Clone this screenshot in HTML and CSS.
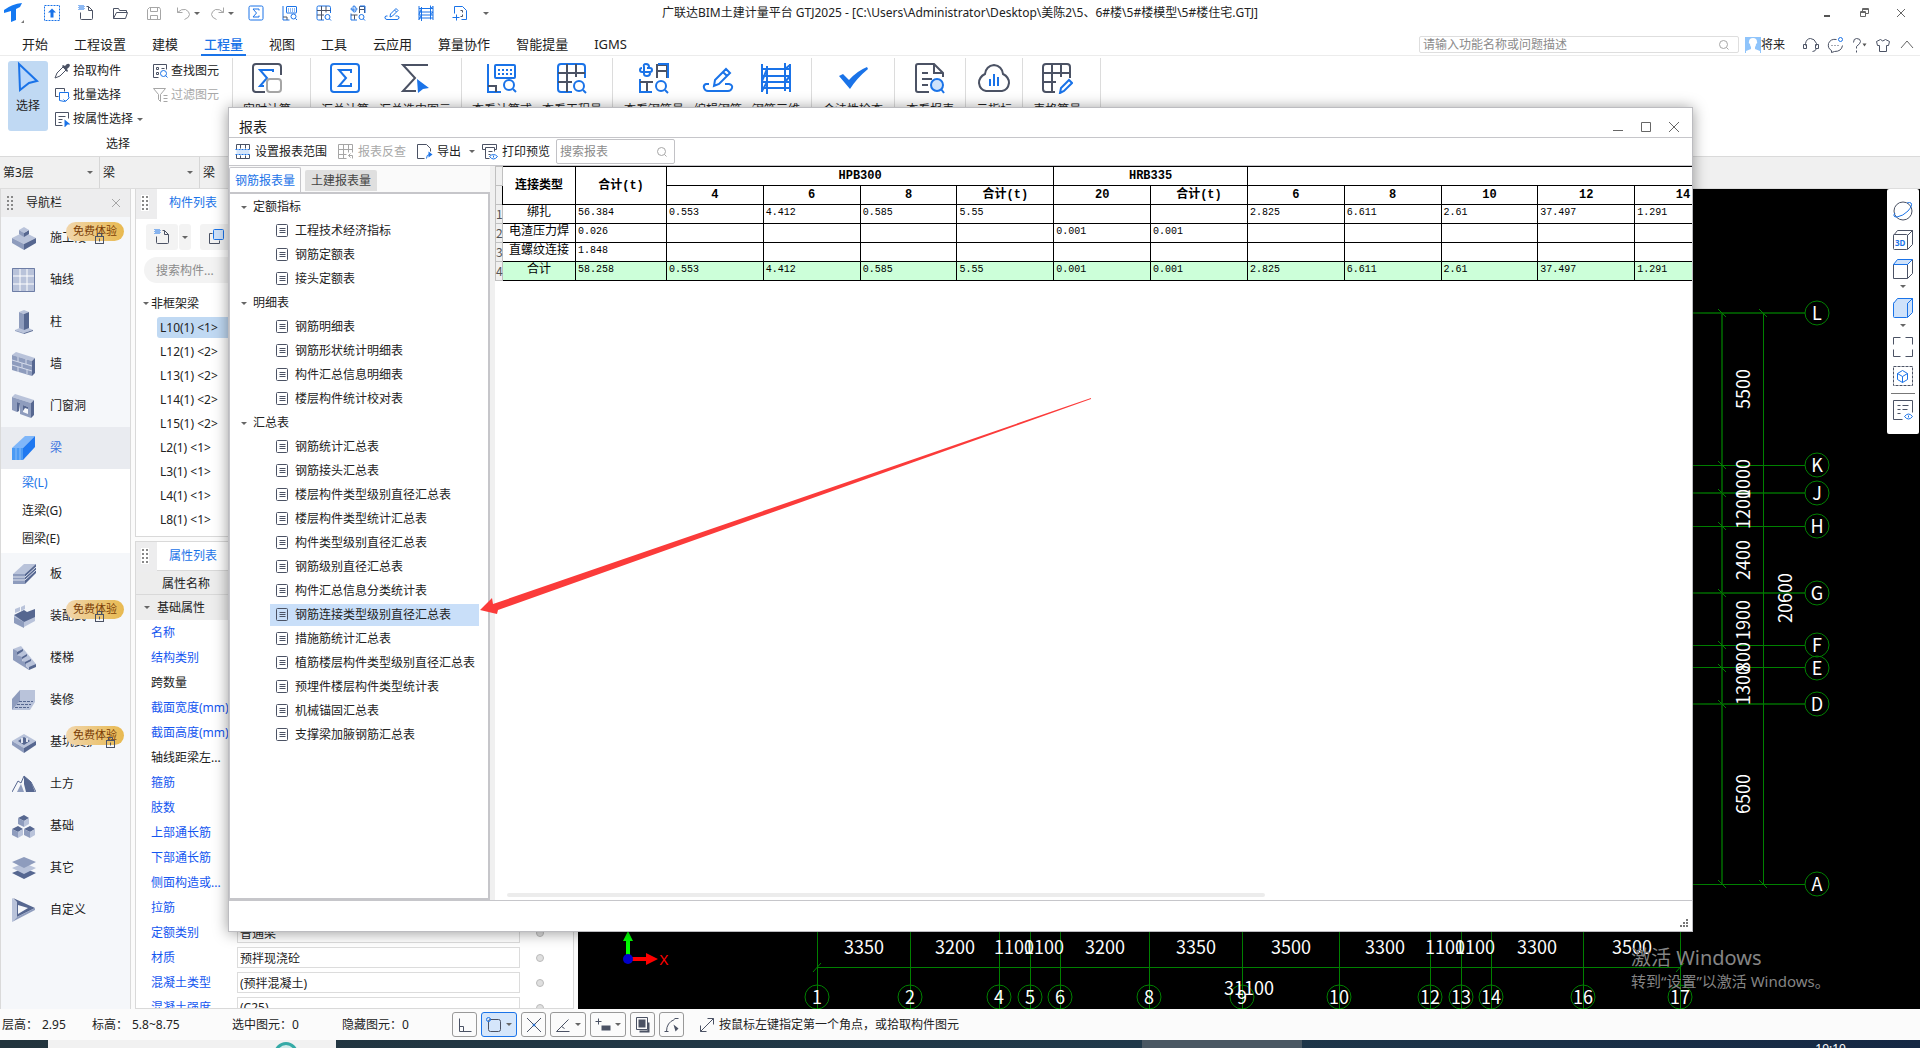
FILE: index.html
```html
<!DOCTYPE html>
<html lang="zh-CN">
<head>
<meta charset="utf-8">
<title>广联达BIM土建计量平台 GTJ2025</title>
<link rel="stylesheet" href="styles.css">
</head>
<body>
<svg class="defs" aria-hidden="true">
  <symbol id="i-sum" viewBox="0 0 32 32"><rect x="2" y="2" width="28" height="28" rx="3" class="b"/><path class="b" d="M22 11V8H10l7 8-7 8h12v-3"/></symbol>
  <symbol id="i-realtime" viewBox="0 0 32 32"><path class="d" d="M14 30H5q-3 0-3-3V5q0-3 3-3h22q3 0 3 3v8"/><path class="b" d="M22 10V8H9l7 8-7 8h4"/><rect x="16" y="17" width="14" height="13" rx="3" class="g"/></symbol>
  <symbol id="i-sumsel" viewBox="0 0 32 32"><path class="d" d="M29 3H4l12 13L4 29h13"/><path class="bf" d="M18 17l12 9-6 1-5 4z"/></symbol>
  <symbol id="i-formula" viewBox="0 0 32 32"><rect x="9" y="3" width="20" height="13" rx="1" class="b"/><path class="b" stroke-dasharray="2 2" d="M12 8h15M12 12h15"/><path class="b" d="M2 2v28h13"/><path class="d" d="M2 24h8v6"/><circle cx="23" cy="23" r="5" class="b"/><path class="b" d="M27 27l3 3"/></symbol>
  <symbol id="i-grid" viewBox="0 0 32 32"><path class="b" d="M16 30H5q-3 0-3-3V5q0-3 3-3h21q3 0 3 3v11"/><path class="d" d="M11 2v28M20 2v13M2 11h27M2 20h14"/><circle cx="23" cy="24" r="5" class="b"/><path class="b" d="M27 28l3 3"/></symbol>
  <symbol id="i-rebarq" viewBox="0 0 32 32"><path class="b" d="M11 5q0-3-3-3T6 5v7q0 2 3 2t3-3M4 6q-2 0-2 2t2 2h8q2 0 2-2t-2-2H9M2 17v13h12"/><path class="d" d="M19 16V3h10v13M19 9h10M2 20h13M9 20v9"/><path class="b" d="M20 2h10v14"/><circle cx="23" cy="24" r="5" class="b"/><path class="b" d="M27 28l3 3"/></symbol>
  <symbol id="i-editbar" viewBox="0 0 32 32"><path class="b" d="M7 22H4q-3 1-2 4 1 3 4 3h20q3 0 4-3 1-3-3-4h-4M12 24l1-6L24 7l4 4-11 11zM21 10l4 4"/></symbol>
  <symbol id="i-bar3d" viewBox="0 0 32 32"><path class="b" d="M2 2v28M7 4v28M25 1v28M30 2v28M2 7h28M2 14h28M2 20h28M2 26h28M7 7l-5 12M25 7l5-4M7 20l-5 9M25 20l5-6"/></symbol>
  <symbol id="i-check" viewBox="0 0 32 32"><path class="bf" d="M2 14l4-2 6 6Q20 9 30 5l1 2Q20 16 13 27z"/></symbol>
  <symbol id="i-report" viewBox="0 0 32 32"><path class="d" d="M15 30H4q-2 0-2-2V4q0-2 2-2h16l9 9v4M20 2v9h9M8 11h6M8 17h10M8 23h6"/><circle cx="23" cy="23" r="6" class="bl"/><path class="b" d="M27 27l3 4"/></symbol>
  <symbol id="i-cloud" viewBox="0 0 32 32"><path class="d" d="M8 29q-6-1-7-8 0-6 6-9 1-8 9-9 8 1 9 9 6 3 6 9-1 7-7 8z"/><path class="b" d="M12 17v7M16 12v12M20 15v9"/></symbol>
  <symbol id="i-gridpen" viewBox="0 0 32 32"><path class="d" d="M14 30H5q-3 0-3-3V5q0-3 3-3h21q3 0 3 3v11M11 2v28M20 2v13M2 11h27M2 20h13"/><path class="b" d="M19 31l1-5 8-8 3 3-8 8z"/></symbol>
  <symbol id="i-new" viewBox="-.5 -.5 16 16"><path class="d" d="M8 1h2l4 4v8q0 1-1 1H3q-1 0-1-1V7M10 1v4h4"/><path class="bd" d="M0 0h6M1 1h5M0 2h6M1 3h5M0 4h6"/></symbol>
  <symbol id="i-open" viewBox="-.5 -.5 16 16"><path class="d" d="M1 13V3h5l1 2h7v2M1 13h12l2-6H4z"/></symbol>
  <symbol id="i-save" viewBox="-.5 -.5 16 16"><path class="g" d="M1 14V4l2-2h10l1 2v10zM4 2v4h7V2M4 14v-4h7v4"/></symbol>
  <symbol id="i-undo" viewBox="-.5 -.5 16 16"><path class="g" d="M2 2v5h5M2 7q4-4 8-3 4 2 4 5t-5 5"/></symbol>
  <symbol id="i-redo" viewBox="-.5 -.5 16 16"><path class="g" d="M14 2v5H9M14 7q-4-4-8-3-4 2-4 5t5 5"/></symbol>
  <symbol id="i-up" viewBox="-.5 -.5 16 16"><rect x="0" y="0" width="15" height="15" class="b" stroke-dasharray="2 1"/><path class="bf" d="M7.500 3l4 4H9v5H6V7H3.500z"/></symbol>
  <symbol id="i-expand" viewBox="-.5 -.5 16 16"><path class="b" d="M2 8V1h8l4 4v9H9M0 12h7M4 9v6"/><path class="d" d="M8 5h2v2M8 11h2V9"/></symbol>
  <symbol id="i-mag" viewBox="-.5 -.5 12 12"><circle cx="5" cy="5" r="4" class="g"/><path class="g" d="M8 8l2 2"/></symbol>
  <symbol id="i-doc" viewBox="-.5 -.5 14 14"><rect x="1" y="0" width="11" height="12" rx="1" class="d"/><path class="d" d="M4 4h6M4 6h6M4 8h6"/></symbol>
  <symbol id="i-lock" viewBox="-.5 -.5 10 12"><rect x="0" y="3" width="8" height="7" class="d"/><path class="d" d="M2 3V0h4v3M4 5v3"/></symbol>
  <symbol id="i-caret" viewBox="0 0 8 5"><path d="M1 1h6L4 4z" fill="#666"/></symbol>
  <symbol id="i-copy" viewBox="-.5 -.5 16 16"><path class="d" d="M4 4H1v10h10v-3"/><rect x="5" y="0" width="10" height="10" rx="1" class="bl"/></symbol>
  <symbol id="i-find" viewBox="-.5 -.5 16 16"><path class="d" d="M6 14H1V1h13v5M4 4h2v2H4zM4 9h2v2H4zM9 5h3"/><circle cx="11" cy="10" r="3" class="b"/><path class="b" d="M13 12l2 2"/></symbol>
  <symbol id="i-cube" viewBox="-.5 -.5 20 20"><rect x="0" y="4" width="14" height="15" rx="1"/><path d="M0 5l4-5h15l-5 5M19 0v14l-5 5V5z"/></symbol>
</svg>

<div class="app">
  <header class="titlebar">
    <div class="quick">
      <svg class="logo" viewBox="0 0 20 20"><path fill="#1479f2" d="M0 7Q8 1 18 0l-2 4-4 2v11l-5 2V8L0 10z"/><path d="M20 17v3h-3z" fill="#777"/></svg>
      <button aria-label="上传"><svg class="s16"><use href="#i-up"/></svg></button>
      <button aria-label="新建"><svg class="s16"><use href="#i-new"/></svg></button>
      <button aria-label="打开"><svg class="s16"><use href="#i-open"/></svg></button>
      <button aria-label="保存"><svg class="s16"><use href="#i-save"/></svg></button>
      <button aria-label="撤销"><svg class="s16"><use href="#i-undo"/></svg><svg class="caret"><use href="#i-caret"/></svg></button>
      <button aria-label="恢复"><svg class="s16"><use href="#i-redo"/></svg><svg class="caret"><use href="#i-caret"/></svg></button>
      <button aria-label="汇总"><svg class="s16 w2"><use href="#i-sum"/></svg></button>
      <button aria-label="计算式"><svg class="s16 w2"><use href="#i-formula"/></svg></button>
      <button aria-label="工程量"><svg class="s16 w2"><use href="#i-grid"/></svg></button>
      <button aria-label="钢筋量"><svg class="s16 w2"><use href="#i-rebarq"/></svg></button>
      <button aria-label="编辑钢筋"><svg class="s16 w2"><use href="#i-editbar"/></svg></button>
      <button aria-label="钢筋三维"><svg class="s16 w2"><use href="#i-bar3d"/></svg></button>
      <button aria-label="扩展"><svg class="s16"><use href="#i-expand"/></svg></button>
      <button class="more" aria-label="更多"><svg class="caret"><use href="#i-caret"/></svg></button>
    </div>
    <h1>广联达BIM土建计量平台 GTJ2025 - [C:\Users\Administrator\Desktop\美陈2\5、6#楼\5#楼模型\5#楼住宅.GTJ]</h1>
    <div class="winctl">
      <button aria-label="最小化"><svg viewBox="0 0 12 12"><path class="k2" d="M3 9h6"/></svg></button>
      <button aria-label="还原"><svg viewBox="-.5 -.5 12 12"><path class="k" d="M4 4V1h6v5H7M2 4h5v5H2zM2 5h5M4 2h6"/></svg></button>
      <button aria-label="关闭"><svg viewBox="0 0 12 12"><path class="k" d="M2 2l8 8M10 2l-8 8"/></svg></button>
    </div>
  </header>

  <nav class="menu">
    <a href="#">开始</a><a href="#">工程设置</a><a href="#">建模</a><a href="#" class="on">工程量</a><a href="#">视图</a><a href="#">工具</a><a href="#">云应用</a><a href="#">算量协作</a><a href="#">智能提量</a><a href="#">IGMS</a>
    <div class="menu-right">
      <label class="ask"><input type="search" aria-label="搜索功能" placeholder="请输入功能名称或问题描述"><svg class="mag"><use href="#i-mag"/></svg></label>
      <span class="user"><svg viewBox="0 0 16 16"><path fill="#8fc4fb" d="M0 0h16v16H0z"/><path fill="#fff" d="M8 1q4 0 4 4 1 1-1 2 0 2-1 3v2l5 2v2H1v-2l5-2v-2Q5 9 5 7 3 6 4 5q0-4 4-4z"/></svg>将来</span>
      <svg class="s16" viewBox="-.5 -.5 16 16"><path class="d" d="M2 8V6q1-5 5-5t6 5v2M0 7h3v4H0zM12 7h3v4h-3zM13 11q-1 3-4 3"/></svg>
      <svg class="s16" viewBox="-.5 -.5 16 16"><path class="d" d="M9 2Q3 1 1 6q-1 5 3 7v2l3-1q7 0 8-6M4 8h1M7 8h1M10 8h1"/><circle cx="13" cy="2" r="2" class="b"/></svg>
      <svg class="s16" viewBox="-.5 -.5 16 16"><path class="d" d="M2 5q0-4 3-4 4 0 4 3 0 2-4 5v2M5 13v2"/><path d="M11 6h4l-2 3z" fill="#555"/></svg>
      <svg class="s16" viewBox="-.5 -.5 16 16"><path class="d" d="M5 2L1 4l1 4h2v6h7V8h2l1-4-4-2q-3 3-5 0z"/></svg>
      <svg class="s16" viewBox="0 0 16 16"><path class="k" d="M2 11l6-7 6 7"/></svg>
    </div>
  </nav>

  <section class="ribbon">
    <div class="grp select">
      <div class="select-row">
        <button class="pick"><svg viewBox="0 0 24 32"><path d="M3 3l18 17-8 2-9 7z" fill="#b9d7fa" stroke="#1a73e8" stroke-width="2"/></svg>选择</button>
        <div class="mini">
          <button><svg class="s16" viewBox="0 0 16 16"><path class="d" d="M1 15l2-5 6-6 3 3-6 6z"/><path d="M8 3l1-1 2 1q3-4 5-1 0 2-3 4l1 2-1 1z" fill="#4b5264"/></svg>拾取构件</button>
          <button><svg class="s16" viewBox="-.5 -.5 16 16"><path class="d" d="M4 9H1V1h9v3"/><path class="b" d="M5 5h9v5M5 5v8l5 1 1-1"/><path class="b" d="M9 12l2 2 4-4"/></svg>批量选择</button>
          <button><svg class="s16" viewBox="-.5 -.5 16 16"><path class="d" d="M8 14H1V1h13v6M4 5h7M4 8h4M4 11h3"/><path class="bf" d="M10 8l6 5-3 0-3 3z"/></svg>按属性选择<svg class="caret"><use href="#i-caret"/></svg></button>
        </div>
        <div class="mini">
          <button><svg class="s16"><use href="#i-find"/></svg>查找图元</button>
          <button class="off"><svg class="s16" viewBox="-.5 -.5 16 16"><path class="g" d="M1 1h12l-5 6v7l-2-2V7zM11 8h4M11 11h4M11 14h4"/></svg>过滤图元</button>
        </div>
      </div>
      <span class="cap">选择</span>
    </div>
    <div class="grp g-real"><button><svg class="s32"><use href="#i-realtime"/></svg>实时计算</button></div>
    <div class="grp"><button><svg class="s32"><use href="#i-sum"/></svg>汇总计算</button><button><svg class="s32"><use href="#i-sumsel"/></svg>汇总选中图元</button></div>
    <div class="grp"><button><svg class="s32"><use href="#i-formula"/></svg>查看计算式</button><button><svg class="s32"><use href="#i-grid"/></svg>查看工程量</button></div>
    <div class="grp roomy"><button><svg class="s32"><use href="#i-rebarq"/></svg>查看钢筋量</button><button><svg class="s32"><use href="#i-editbar"/></svg>编辑钢筋</button><button><svg class="s32"><use href="#i-bar3d"/></svg>钢筋三维</button></div>
    <div class="grp roomy"><button><svg class="s32"><use href="#i-check"/></svg>合法性检查</button></div>
    <div class="grp roomy"><button><svg class="s32"><use href="#i-report"/></svg>查看报表</button></div>
    <div class="grp"><button><svg class="s32"><use href="#i-cloud"/></svg>云指标</button></div>
    <div class="grp g-real"><button><svg class="s32"><use href="#i-gridpen"/></svg>表格算量</button></div>
  </section>

  <section class="context">
    <div class="combo"><select aria-label="楼层"><option>第3层</option></select><svg class="caret"><use href="#i-caret"/></svg></div>
    <div class="combo"><select aria-label="类别"><option>梁</option></select><svg class="caret"><use href="#i-caret"/></svg></div>
    <div class="combo"><select aria-label="构件类型"><option>梁</option></select><svg class="caret"><use href="#i-caret"/></svg></div>
  </section>

  <main>
    <aside class="nav">
      <div class="nav-head"><i class="grip"></i><span>导航栏</span><button aria-label="关闭导航栏"><svg viewBox="0 0 10 10"><path class="g" d="M1 1l8 8M9 1L1 9"/></svg></button></div>
      <a href="#" class="it"><svg viewBox="0 0 24 24"><path fill="#b9c3da" d="M0 12l12-6 12 6-12 6z"/><path fill="#8e9cbd" d="M0 12l12 6v6L0 17z"/><path fill="#566790" d="M24 12l-12 6v6l12-7zM12 7l5-3v4l-5 3z"/><path fill="#b9c3da" d="M7 4l5-3 5 3-5 3z"/><path fill="#8e9cbd" d="M7 4l5 3v4L7 8z"/></svg>施工段<svg class="lock"><use href="#i-lock"/></svg><b>免费体验</b></a>
      <a href="#" class="it"><svg viewBox="0 0 24 24"><path fill="#b9c3da" d="M0 0h23v24H0z"/><path stroke="#fff" d="M8 1v22M15 1v22M1 8h21M1 16h21" fill="none"/><path stroke="#6d7da5" fill="none" d="M.5 .5h22v23H.5z"/></svg>轴线</a>
      <a href="#" class="it"><svg viewBox="0 0 24 24"><path fill="#b9c3da" d="M3 20l9-4 9 4-9 3zM7 2l5-2 5 2-5 2z"/><path fill="#8e9cbd" d="M7 2l5 2v16l-5-2zM3 20l9 3v1l-9-3z"/><path fill="#566790" d="M17 2l-5 2v16l5-2zM21 20l-9 3v1l9-3z"/></svg>柱</a>
      <a href="#" class="it"><svg viewBox="0 0 24 24"><path fill="#b9c3da" d="M0 3l4-3 19 6-3 3z"/><path fill="#8e9cbd" d="M0 3l20 6v15L0 18z"/><path fill="#566790" d="M20 9l3-3v15l-3 3z"/><path stroke="#d5dbea" fill="none" d="M0 8l20 6M0 13l20 6M6 5v5M14 7v5M10 11v5M6 15v5M15 17v5"/></svg>墙</a>
      <a href="#" class="it"><svg viewBox="0 0 24 24"><path fill="#b9c3da" d="M0 3l3-3 19 6-3 3z"/><path fill="#8e9cbd" fill-rule="evenodd" d="M0 3l19 6v15L8 20V9L5 8v10l-5-2zM11 11v7l5 2v-7z"/><path fill="#566790" d="M19 9l3-3v15l-3 3zM5 8l3 1-1 8-2 1zM11 11l5 2v2l-3-1-2 3z"/></svg>门窗洞</a>
      <a href="#" class="it on"><svg viewBox="0 0 24 24"><path fill="#7fb6f9" d="M0 12L13 0h10L11 12z"/><path fill="#4b9bf5" d="M0 12h11v12H0z"/><path fill="#1f78f0" d="M11 12L23 0v11L11 24z"/><path stroke="#8bbdf8" d="M4 12v12M8 12v12"/></svg>梁</a>
      <div class="sub"><a href="#" class="on">梁(L)</a><a href="#">连梁(G)</a><a href="#">圈梁(E)</a></div>
      <a href="#" class="it"><svg viewBox="0 0 24 24"><path fill="#b9c3da" d="M1 12L12 2h12L13 12z"/><path fill="#8e9cbd" d="M1 12h12v10H1z"/><path fill="#566790" d="M13 12L24 2v9L13 22z"/><path stroke="#dfe4ef" fill="none" d="M1 15h12l11-10M1 18h12L24 8"/></svg>板</a>
      <a href="#" class="it"><svg viewBox="0 0 24 24"><path fill="#b9c3da" d="M2 11l10 6 11-6v6l-11 6-10-6zM3 5l5-2v4L3 9zM9 3l4-2v4L9 7z"/><path fill="#566790" d="M2 11l10-5 3 2 8-3v8l-11 5z"/><path fill="#8e9cbd" d="M2 13l10 5v6L2 19z"/></svg>装配式<svg class="lock"><use href="#i-lock"/></svg><b>免费体验</b></a>
      <a href="#" class="it"><svg viewBox="0 0 24 24"><path fill="#b9c3da" d="M1 3l8-3 15 18-7 5z"/><path fill="#8e9cbd" d="M1 3l4 2v4l5 2v4l4 1v4l3 3v1L1 14z"/><path fill="#566790" d="M5 6l6-3v2L5 9zM10 11l5-3v2l-5 3zM13 16l6-3v2l-6 3zM17 21l7-3v3l-7 3z"/></svg>楼梯</a>
      <a href="#" class="it"><svg viewBox="0 0 24 24"><path fill="#b9c3da" d="M8 2h15v12l-5 8H0l8-9z"/><path fill="#8e9cbd" d="M0 11l8-9v11l-8 9z"/><path stroke="#566790" fill="none" stroke-dasharray="3 1" d="M7 13.500h14M5 16.500h14M3 19.500h14"/></svg>装修</a>
      <a href="#" class="it"><svg viewBox="0 0 24 24"><path fill="#b9c3da" d="M0 11l12-7 12 7-12 7z"/><path fill="#8e9cbd" d="M0 11l12 7v5L0 15z"/><path fill="#566790" d="M24 11l-12 7v5l12-8zM6 11l6-4 6 4-6 4z"/><path fill="#dfe4ef" d="M9 8h2v5H9zM14 8h2v4h-2z"/></svg>基坑支护<svg class="lock far"><use href="#i-lock"/></svg><b>免费体验</b></a>
      <a href="#" class="it"><svg viewBox="0 0 24 24"><path fill="none" stroke="#566790" d="M0 20L6 9l3 2 3-7 7 6 5 10"/><path fill="#566790" d="M12 4l7 6 4 10h-9l-2-8z"/><path fill="#8e9cbd" d="M9 12l3 8H5z"/></svg>土方</a>
      <a href="#" class="it"><svg viewBox="0 0 24 24"><path fill="#566790" d="M6 4l6-3 5 3-5 3zM0 15l6-3 5 3-5 3zM12 15l6-3 5 3-5 3z"/><path fill="#8e9cbd" d="M6 4l6 3v6l-6-3zM0 15l6 3v6l-6-3zM12 15l6 3v6l-6-3z"/><path fill="#b9c3da" d="M17 4l-5 3v6l5-3zM11 15l-5 3v6l5-3zM23 15l-5 3v6l5-3z"/></svg>基础</a>
      <a href="#" class="it"><svg viewBox="0 0 24 24"><path fill="#566790" d="M0 17l12-5 12 5-12 6z"/><path fill="#b9c3da" d="M0 12l12-5 12 5-12 6z"/><path fill="#8e9cbd" d="M0 6l12-5 12 5-12 6z"/></svg>其它</a>
      <a href="#" class="it"><svg viewBox="0 0 24 24"><path fill="#b9c3da" d="M0 0l5 4v15l-5 5z"/><path fill="#566790" fill-rule="evenodd" d="M1 0l22 10-18 9V4zM6 7v9l10-6z"/><path fill="#8e9cbd" d="M0 24l5-5 18-9v2z"/></svg>自定义</a>
    </aside>

    <div class="panels">
      <section class="panel comps">
        <div class="panel-head"><i class="grip"></i><h2>构件列表</h2></div>
        <div class="tools"><button aria-label="新建构件"><svg class="s16"><use href="#i-new"/></svg></button><button class="thin" aria-label="新建选项"><svg class="caret"><use href="#i-caret"/></svg></button><button class="cp" aria-label="复制"><svg class="s16"><use href="#i-copy"/></svg></button></div>
        <input class="pill" type="search" aria-label="搜索构件" placeholder="搜索构件...">
        <ul>
          <li class="root"><svg class="caret"><use href="#i-caret"/></svg>非框架梁</li>
          <li class="on">L10(1) &lt;1&gt;</li><li>L12(1) &lt;2&gt;</li><li>L13(1) &lt;2&gt;</li><li>L14(1) &lt;2&gt;</li><li>L15(1) &lt;2&gt;</li><li>L2(1) &lt;1&gt;</li><li>L3(1) &lt;1&gt;</li><li>L4(1) &lt;1&gt;</li><li>L8(1) &lt;1&gt;</li>
        </ul>
      </section>
      <section class="panel props">
        <div class="panel-head"><i class="grip"></i><h2>属性列表</h2></div>
        <div class="prop-title">属性名称</div>
        <div class="prop-group"><svg class="caret"><use href="#i-caret"/></svg>基础属性</div>
        <div class="prop"><label for="p1">名称</label><input id="p1" value="L10(1)"><i></i></div>
        <div class="prop"><label for="p2">结构类别</label><input id="p2"><i></i></div>
        <div class="prop plain"><label for="p3">跨数量</label><input id="p3"><i></i></div>
        <div class="prop"><label for="p4">截面宽度(mm)</label><input id="p4"><i></i></div>
        <div class="prop"><label for="p5">截面高度(mm)</label><input id="p5"><i></i></div>
        <div class="prop plain"><label for="p6">轴线距梁左...</label><input id="p6"><i></i></div>
        <div class="prop"><label for="p7">箍筋</label><input id="p7"><i></i></div>
        <div class="prop"><label for="p8">肢数</label><input id="p8"><i></i></div>
        <div class="prop"><label for="p9">上部通长筋</label><input id="p9"><i></i></div>
        <div class="prop"><label for="p10">下部通长筋</label><input id="p10"><i></i></div>
        <div class="prop"><label for="p11">侧面构造或...</label><input id="p11"><i></i></div>
        <div class="prop"><label for="p12">拉筋</label><input id="p12"><i></i></div>
        <div class="prop"><label for="p13">定额类别</label><input id="p13" value="普通梁"><i></i></div>
        <div class="prop"><label for="p14">材质</label><input id="p14" value="预拌现浇砼"><i></i></div>
        <div class="prop"><label for="p15">混凝土类型</label><input id="p15" value="(预拌混凝土)"><i></i></div>
        <div class="prop"><label for="p16">混凝土强度</label><input id="p16" value="(C25)"><i></i></div>
      </section>
    </div>

    <section class="canvas">
      <svg class="drawing" viewBox="578 189 1342 820" preserveAspectRatio="xMinYMin slice">
        <g class="dim">
          <path class="dk" d="M1722 313V884M1693 313H1805M1693 493H1805M1693 593H1805M1693 704H1805"/>
          <path d="M1763.5 313V884M1693 465.500H1805M1693 526.500H1805M1693 645.500H1805M1693 667.500H1805M1693 884.500H1805"/>
          <path d="M1718 309l8 8M1759 309l8 8M1718 461l8 8M1718 489l8 8M1718 522l8 8M1718 589l8 8M1718 641l8 8M1718 664l8 8M1718 700l8 8M1718 880l8 8M1759 880l8 8"/>
          <path d="M817.500 930V1009M910.500 930V1009M999.500 930V1009M1030.500 930V1009M1060.500 930V1009M1149.500 930V1009M1242.500 930V1009M1339.500 930V1009M1430.500 930V1009M1461.500 930V1009M1491.500 930V1009M1583.500 930V1009M1680.500 930V1009M817 967.500H1680"/>
          <path d="M813 972l8-9M1676 972l8-9"/>
          <g class="rings">
            <circle cx="1817" cy="313" r="12"/><circle cx="1817" cy="465" r="12"/><circle cx="1817" cy="493" r="12"/><circle cx="1817" cy="526" r="12"/><circle cx="1817" cy="593" r="12"/><circle cx="1817" cy="645" r="12"/><circle cx="1817" cy="668" r="12"/><circle cx="1817" cy="704" r="12"/><circle cx="1817" cy="884" r="12"/>
            <circle cx="817" cy="997" r="12"/><circle cx="910" cy="997" r="12"/><circle cx="999" cy="997" r="12"/><circle cx="1030" cy="997" r="12"/><circle cx="1060" cy="997" r="12"/><circle cx="1149" cy="997" r="12"/><circle cx="1242" cy="997" r="12"/><circle cx="1339" cy="997" r="12"/><circle cx="1430" cy="997" r="12"/><circle cx="1461" cy="997" r="12"/><circle cx="1491" cy="997" r="12"/><circle cx="1583" cy="997" r="12"/><circle cx="1680" cy="997" r="12"/>
          </g>
        </g>
        <g class="lbl">
          <text x="1817" y="320">L</text><text x="1817" y="472">K</text><text x="1817" y="500">J</text><text x="1817" y="533">H</text><text x="1817" y="600">G</text><text x="1817" y="652">F</text><text x="1817" y="675">E</text><text x="1817" y="711">D</text><text x="1817" y="891">A</text>
          <text x="817" y="1004">1</text><text x="910" y="1004">2</text><text x="999" y="1004">4</text><text x="1030" y="1004">5</text><text x="1060" y="1004">6</text><text x="1149" y="1004">8</text><text x="1242" y="1004">9</text><text x="1339" y="1004">10</text><text x="1430" y="1004">12</text><text x="1461" y="1004">13</text><text x="1491" y="1004">14</text><text x="1583" y="1004">16</text><text x="1680" y="1004">17</text>
          <text x="864" y="954">3350</text><text x="955" y="954">3200</text><text x="1014" y="954">1100</text><text x="1044" y="954">1100</text><text x="1105" y="954">3200</text><text x="1196" y="954">3350</text><text x="1291" y="954">3500</text><text x="1385" y="954">3300</text><text x="1445" y="954">1100</text><text x="1475" y="954">1100</text><text x="1537" y="954">3300</text><text x="1632" y="954">3500</text><text x="1249" y="995">31100</text>
          <text transform="translate(1750 389) rotate(-90)">5500</text><text transform="translate(1750 479) rotate(-90)">1000</text><text transform="translate(1750 509) rotate(-90)">1200</text><text transform="translate(1750 560) rotate(-90)">2400</text><text transform="translate(1750 620) rotate(-90)">1900</text><text transform="translate(1750 657) rotate(-90)">800</text><text transform="translate(1750 685) rotate(-90)">1300</text><text transform="translate(1750 794) rotate(-90)">6500</text><text transform="translate(1792 598) rotate(-90)">20600</text>
        </g>
        <path d="M626 955V941h-3l5-10 5 10h-3v14z" fill="#0f0"/><path d="M632 957h14v-4l12 6-12 6v-4h-14z" fill="#f00"/><circle cx="628" cy="959" r="5" fill="#00c"/>
        <text x="664" y="965" class="ax">X</text>
        <g class="wm"><text class="wm1" x="1631" y="965">激活 Windows</text><text class="wm2" x="1631" y="987">转到“设置”以激活 Windows。</text></g>
      </svg>
      <div class="viewbar">
        <button aria-label="动态观察"><svg viewBox="0 0 20 20"><circle cx="10" cy="10" r="9" class="d"/><path class="b" d="M2 12q-3 4 2 4 6-1 11-6 5-6 3-8-1-1-4 0"/></svg></button>
        <button aria-label="三维"><svg class="d"><use href="#i-cube"/><text x="2" y="16">3D</text></svg></button>
        <button class="dd" aria-label="俯视"><svg viewBox="-.5 -.5 20 20"><path class="d" d="M0 5h14v14H0zM19 0v14l-5 5"/><path class="bl" d="M0 5l4-5h15l-5 5z"/></svg><svg class="caret"><use href="#i-caret"/></svg></button>
        <button class="dd" aria-label="着色"><svg class="bl"><use href="#i-cube"/></svg><svg class="caret"><use href="#i-caret"/></svg></button>
        <button aria-label="全屏"><svg viewBox="-.5 -.5 20 20"><path class="d" d="M0 7V0h7M12 0h7v7M19 12v7h-7M7 19H0v-7"/></svg></button>
        <button aria-label="局部三维"><svg viewBox="-.5 -.5 20 20"><path class="d" stroke-dasharray="3 1" d="M0 0h19v19H0z"/><path class="b" d="M9 4l5 3v6l-5 3-5-3V7zM4 7l5 3 5-3M9 10v6"/></svg></button>
        <hr>
        <button aria-label="显示设置"><svg viewBox="-.5 -.5 20 20"><path class="d" d="M9 19H0V0h19v12M4 5h3M9 5h6M4 9h3M9 9h5M4 13h3"/><path class="b" d="M11 16q4-5 8 0-4 5-8 0zM15 15v2"/></svg></button>
      </div>
    </section>
  </main>

  <footer class="status">
    <span class="s1">层高：</span><span class="s2">2.95</span><span class="s3">标高：</span><span class="s4">5.8~8.75</span><span class="s5">选中图元：0</span><span class="s6">隐藏图元：0</span>
    <div class="snap">
      <button aria-label="正交"><svg viewBox="-.5 -.5 16 16"><path class="d" d="M2 1v13h12M2 9h4v5"/></svg></button>
      <button class="w on" aria-label="矩形"><svg viewBox="-.5 -.5 16 16"><rect x="2" y="2" width="12" height="12" rx="2" class="d"/><circle cx="2" cy="2" r="2" class="b"/></svg><svg class="caret"><use href="#i-caret"/></svg></button>
      <button aria-label="交点"><svg viewBox="0 0 16 16"><path class="d" d="M1 1l14 14M15 1L1 15"/><circle cx="8" cy="8" r="1" class="b"/></svg></button>
      <button class="w" aria-label="角度"><svg viewBox="-.5 -.5 16 16"><path class="d" d="M13 2L1 14h13M6 9l3 2"/></svg><svg class="caret"><use href="#i-caret"/></svg></button>
      <button class="w" aria-label="偏移"><svg viewBox="-.5 -.5 16 16"><path class="d" d="M0 4h6M3 1v6"/><path fill="#4b5264" d="M6 8h9v5H6z"/></svg><svg class="caret"><use href="#i-caret"/></svg></button>
      <button aria-label="选择层"><svg viewBox="-.5 -.5 16 16"><path class="d" d="M1 0h11v12H1z"/><path fill="#4b5264" d="M3 2h7v8H3zM12 5h2v10H4v-2h8z"/></svg></button>
      <button aria-label="折线"><svg viewBox="-.5 -.5 16 16"><path class="d" d="M2 14q0-9 8-12M0 14h4M10 1h4"/><path fill="#4b5264" d="M9 7l5 4-3 3z"/></svg></button>
    </div>
    <svg class="s16 diag" viewBox="-.5 -.5 16 16"><path class="d" d="M1 14L14 1M8 1h6v6M1 8v6h6"/></svg>
    <span>按鼠标左键指定第一个角点，或拾取构件图元</span>
  </footer>
  <div class="taskbar"><span class="start"></span><span class="pale"><i></i></span><span class="lit"></span><time>19:10</time></div>
</div>

<section class="dialog" role="dialog" aria-label="报表">
  <header><h2>报表</h2>
    <button aria-label="最小化"><svg viewBox="0 0 12 12"><path class="k" d="M1 9.500h10"/></svg></button>
    <button aria-label="最大化"><svg viewBox="0 0 12 12"><path class="k" d="M1.500 1.500h9v9h-9z"/></svg></button>
    <button aria-label="关闭"><svg viewBox="0 0 12 12"><path class="k" d="M1 1l10 10M11 1L1 11"/></svg></button>
  </header>
  <div class="dlg-tools">
    <button><svg class="s16" viewBox="-.5 -.5 16 16"><path fill="#d5e6fb" d="M1 5h13v5H1z"/><path class="d" d="M1 5V0h13v5M1 10v4h13v-4M5 0v4M10 0v4M5 11v3M10 11v3"/><path class="b" stroke-dasharray="2 1" d="M0 5h15M0 10h15"/></svg>设置报表范围</button>
    <button class="off"><svg class="s16" viewBox="-.5 -.5 16 16"><path class="g" d="M8 14H0V0h14v8M5 0v14M10 0v8M0 5h14M0 10h8M14 14v-3h-4M12 9l-2 2 2 2"/></svg>报表反查</button>
    <button><svg class="s16" viewBox="-.5 -.5 16 16"><path class="d" d="M7 14H0V0h9l4 4v3"/><path class="b" d="M9 14q0-4 3-4"/><path class="bf" d="M11 7l4 3-4 3z"/></svg>导出<svg class="caret"><use href="#i-caret"/></svg></button>
    <button><svg class="s16" viewBox="-.5 -.5 16 16"><path class="d" d="M3 5H0V0h14v5h-2M3 3v11h4M3 3h9v4M6 7h4M6 10h2"/><path class="b" d="M7 12q4-4 8 0-4 5-8 0zM11 11v2"/></svg>打印预览</button>
    <label><input type="search" aria-label="搜索报表" placeholder="搜索报表"><svg class="mag"><use href="#i-mag"/></svg></label>
  </div>
  <div class="dlg-body">
    <div class="left">
      <div class="tabs"><button class="on">钢筋报表量</button><button>土建报表量</button></div>
      <ul class="tree">
        <li class="root"><svg class="caret"><use href="#i-caret"/></svg>定额指标</li>
        <li><svg><use href="#i-doc"/></svg><span>工程技术经济指标</span></li>
        <li><svg><use href="#i-doc"/></svg><span>钢筋定额表</span></li>
        <li><svg><use href="#i-doc"/></svg><span>接头定额表</span></li>
        <li class="root"><svg class="caret"><use href="#i-caret"/></svg>明细表</li>
        <li><svg><use href="#i-doc"/></svg><span>钢筋明细表</span></li>
        <li><svg><use href="#i-doc"/></svg><span>钢筋形状统计明细表</span></li>
        <li><svg><use href="#i-doc"/></svg><span>构件汇总信息明细表</span></li>
        <li><svg><use href="#i-doc"/></svg><span>楼层构件统计校对表</span></li>
        <li class="root"><svg class="caret"><use href="#i-caret"/></svg>汇总表</li>
        <li><svg><use href="#i-doc"/></svg><span>钢筋统计汇总表</span></li>
        <li><svg><use href="#i-doc"/></svg><span>钢筋接头汇总表</span></li>
        <li><svg><use href="#i-doc"/></svg><span>楼层构件类型级别直径汇总表</span></li>
        <li><svg><use href="#i-doc"/></svg><span>楼层构件类型统计汇总表</span></li>
        <li><svg><use href="#i-doc"/></svg><span>构件类型级别直径汇总表</span></li>
        <li><svg><use href="#i-doc"/></svg><span>钢筋级别直径汇总表</span></li>
        <li><svg><use href="#i-doc"/></svg><span>构件汇总信息分类统计表</span></li>
        <li class="on"><svg><use href="#i-doc"/></svg><span>钢筋连接类型级别直径汇总表</span></li>
        <li><svg><use href="#i-doc"/></svg><span>措施筋统计汇总表</span></li>
        <li><svg><use href="#i-doc"/></svg><span>植筋楼层构件类型级别直径汇总表</span></li>
        <li><svg><use href="#i-doc"/></svg><span>预埋件楼层构件类型统计表</span></li>
        <li><svg><use href="#i-doc"/></svg><span>机械锚固汇总表</span></li>
        <li><svg><use href="#i-doc"/></svg><span>支撑梁加腋钢筋汇总表</span></li>
      </ul>
    </div>
    <div class="sheet">
      <table>
        <colgroup><col class="c0"><col class="c1"><col class="c2"><col span="11"></colgroup>
        <thead>
          <tr><td class="n"></td><th rowspan="2">连接类型</th><th rowspan="2">合计(t)</th><th colspan="4">HPB300</th><th colspan="2">HRB335</th><th colspan="5"></th></tr>
          <tr><td class="n"></td><th>4</th><th>6</th><th>8</th><th>合计(t)</th><th>20</th><th>合计(t)</th><th>6</th><th>8</th><th>10</th><th>12</th><th>14</th></tr>
        </thead>
        <tbody>
          <tr><td class="n">1</td><td class="m">绑扎</td><td>56.384</td><td>0.553</td><td>4.412</td><td>0.585</td><td>5.55</td><td></td><td></td><td>2.825</td><td>6.611</td><td>2.61</td><td>37.497</td><td>1.291</td></tr>
          <tr><td class="n">2</td><td class="m">电渣压力焊</td><td>0.026</td><td></td><td></td><td></td><td></td><td>0.001</td><td>0.001</td><td></td><td></td><td></td><td></td><td></td></tr>
          <tr><td class="n">3</td><td class="m">直螺纹连接</td><td>1.848</td><td></td><td></td><td></td><td></td><td></td><td></td><td></td><td></td><td></td><td></td><td></td></tr>
          <tr class="total"><td class="n">4</td><td class="m">合计</td><td>58.258</td><td>0.553</td><td>4.412</td><td>0.585</td><td>5.55</td><td>0.001</td><td>0.001</td><td>2.825</td><td>6.611</td><td>2.61</td><td>37.497</td><td>1.291</td></tr>
        </tbody>
      </table>
      <div class="hbar"></div>
    </div>
  </div>
  <footer><svg viewBox="0 0 9 9"><path fill="#777" d="M6 0h2v2H6zM6 3h2v2H6zM3 3h2v2H3zM6 6h2v2H6zM3 6h2v2H3zM0 6h2v2H0z"/></svg></footer>
  <svg class="arrow" viewBox="480 398 612 218"><path fill="#fb3b3a" d="M480 610l12-12 1 6L1091 398v1L498 610l-1 4z"/></svg>
</section>
</body>
</html>
```
FILE: styles.css
```css
* { box-sizing: border-box; }
body { margin: 0; font: 12px/18px "Noto Sans", "Noto Sans CJK SC", sans-serif; color: #222; background: #fff; }
button, input, select { font: inherit; color: inherit; border: 0; background: none; padding: 0; margin: 0; outline: 0; }
button { white-space: nowrap; }
a { color: inherit; text-decoration: none; }
h1, h2 { margin: 0; font-weight: 400; }
ul { list-style: none; margin: 0; padding: 0; }
svg { display: block; flex: none; fill: none; }
input::placeholder { color: #8b8b8b; opacity: 1; }
input[type=search]::-webkit-search-cancel-button { display: none; }
.defs { position: absolute; width: 0; height: 0; }

/* stroke classes used by every icon */
.d { fill: none; stroke: #4b5264; stroke-width: var(--w, 1); }
.b { fill: none; stroke: #1a73e8; stroke-width: var(--w, 1); }
.g { fill: none; stroke: #a6a6a6; stroke-width: var(--w, 1); }
.bl { fill: #cfe2fa; stroke: #1a73e8; stroke-width: var(--w, 1); }
.k { fill: none; stroke: #666; }
.k2 { fill: none; stroke: #555; stroke-width: 2; }
.bf { fill: #1a73e8; }
.bd { fill: none; stroke: #1a73e8; stroke-dasharray: 1 1; }
.s16 { width: 16px; height: 16px; --w: 1; }
.w2 { --w: 2; }
.s32 { width: 32px; height: 32px; --w: 2; }
.caret { width: 8px; height: 5px; }
.mag { width: 12px; height: 12px; }

.app { height: 100vh; display: flex; flex-direction: column; overflow: hidden; }
.titlebar { height: 26px; display: grid; grid-template-columns: 1fr auto 1fr; align-items: center; }
.titlebar h1 { font-size: 12px; white-space: nowrap; }
.quick { display: flex; align-items: center; }
.quick .logo { width: 20px; height: 20px; margin: 0 11px 0 4px; }
.quick button { width: 34px; height: 24px; display: flex; align-items: center; justify-content: center; gap: 2px; }
.quick .more { width: 18px; }
.winctl { justify-self: end; display: flex; gap: 25px; padding-right: 13px; }
.winctl svg { width: 12px; height: 12px; }

.menu { height: 30px; display: flex; gap: 26px; padding: 0 5px 0 22px; align-items: center; border-bottom: 1px solid #ececec; font-size: 13px; }
.menu a { position: relative; align-self: stretch; line-height: 24px; padding-top: 6px; }
.menu .on { color: #1a73e8; font-weight: 500; }
.menu .on::after { content: ""; position: absolute; left: -3px; right: -3px; bottom: -1px; height: 2px; background: #1a73e8; }
.menu-right { margin-left: auto; display: flex; align-items: center; gap: 8px; font-size: 12px; padding-top: 8px; }
.ask { width: 320px; height: 17px; border: 1px solid #dedede; border-radius: 2px; display: flex; align-items: center; padding: 0 8px 0 3px; }
.ask input { flex: 1; line-height: 15px; }
.user { display: flex; align-items: center; margin-right: 10px; margin-left: -2px; }
.user svg { width: 16px; height: 16px; }

.ribbon { height: 100px; display: flex; padding-top: 2px; }
.grp { display: flex; gap: 10px; padding: 4px 10px 0; border-right: 1px solid #dcdcdc; }
.grp.roomy { padding: 4px 11px 0; }
.grp > button { display: flex; flex-direction: column; align-items: center; gap: 7px; align-self: flex-start; }
.g-real { width: 78px; }
.grp.select { width: 233px; padding: 3px 8px 0; flex-direction: column; gap: 4px; }
.select-row { display: flex; height: 70px; }
.pick { width: 40px; height: 70px; display: flex; flex-direction: column; align-items: center; gap: 4px; background: #c0d9f3; border-radius: 3px; }
.pick svg { width: 24px; height: 32px; }
.mini { display: flex; flex-direction: column; gap: 6px; padding: 1px 0 0 6px; }
.mini + .mini { padding-left: 8px; }
.mini button { display: flex; align-items: center; gap: 3px; height: 18px; }
.off { color: #a8a8a8; }
.cap { text-align: center; padding-left: 4px; }

.context { height: 32px; display: flex; background: #f0f0f0; border-top: 1px solid #dadada; }
.combo { width: 100px; display: flex; align-items: center; border-right: 1px solid #d6d6d6; padding: 0 5px 0 3px; }
.combo select { flex: 1; appearance: none; height: 28px; }

main { flex: 1; min-height: 0; display: flex; gap: 4px; border-top: 1px solid #ddd; background: #fbfbfb; }
.nav { width: 131px; background: #f5f7fa; border: solid #dadada; border-width: 0 1px; overflow: hidden; }
.grip { width: 8px; height: 16px; background: radial-gradient(circle, #888 1px, transparent 1px) 0 0 / 4px 4px; flex: none; }
.nav-head { height: 28px; background: #ededee; display: flex; align-items: center; padding: 0 9px 0 5px; gap: 12px; }
.nav-head button { margin-left: auto; }
.nav-head svg { width: 10px; height: 10px; }
.it { position: relative; height: 42px; display: flex; align-items: center; gap: 14px; padding-left: 11px; }
.it > svg { width: 24px; height: 24px; }
.it.on { background: #e9ebf0; color: #3b73e0; }
.it b { position: absolute; left: 65px; top: 5px; width: 58px; height: 19px; border-radius: 10px; background: linear-gradient(90deg, #f1d6ac, #e8b950); color: #7a3c05; font-weight: 400; font-size: 11px; text-align: center; }
.it .lock { position: absolute; left: 94px; top: 16px; width: 10px; height: 12px; z-index: 1; }
.it .far { left: 105px; }
.sub { background: #fff; height: 84px; }
.sub a { display: block; line-height: 28px; padding-left: 21px; }
.sub .on { color: #1a73e8; }

.panels { width: 439px; display: flex; flex-direction: column; gap: 4px; min-height: 0; }
.panel { background: #fff; border: 1px solid #d9d9d9; border-top-width: 0; overflow: hidden; }
.comps { height: 348px; flex: none; }
.props { flex: 1; border-top-width: 1px; }
.panel-head { height: 28px; display: flex; align-items: center; background: #fff; }
.panel-head .grip { margin: 0 9px 0 5px; box-shadow: 0 0 0 8px #ededee; }
.panel-head h2 { font-size: 12px; color: #1a73e8; padding-left: 11px; }
.tools { display: flex; padding: 7px 10px; gap: 1px; }
.tools button { width: 32px; height: 26px; background: #f3f3f3; border-radius: 3px; display: flex; align-items: center; justify-content: center; }
.tools .thin { width: 12px; }
.tools .cp { margin-left: 8px; }
.pill { display: block; margin-left: 8px; width: 300px; height: 26px; border-radius: 13px; background: #f3f3f3; padding-left: 12px; }
.comps li { height: 21px; line-height: 21px; margin: 0 0 3px 21px; padding-left: 3px; border-radius: 3px; }
.comps .root { margin: 10px 0 3px 6px; padding: 0; display: flex; align-items: center; gap: 1px; }
.comps .on { background: #c0d9f3; }
.prop-title { height: 25px; line-height: 25px; background: #ededed; border: solid #d9d9d9; border-width: 1px 0; padding-left: 26px; }
.prop-group { height: 25px; background: #ededed; display: flex; align-items: center; gap: 6px; padding-left: 7px; }
.prop { height: 25px; display: flex; align-items: center; color: #1456f0; }
.prop.plain { color: #222; }
.prop label { width: 101px; padding-left: 15px; white-space: nowrap; overflow: hidden; }
.prop input { width: 283px; height: 21px; border: 1px solid #dcdcdc; padding-left: 2px; color: #222; }
.prop i { width: 8px; height: 8px; margin-left: 16px; border-radius: 50%; border: 1px solid #bbb; background: #dfdfdf; }

.canvas { flex: 1; min-width: 0; background: #000; position: relative; overflow: hidden; }
.drawing { width: 100%; height: 100%; }
.dim path { stroke: #008000; }
.dim .dk { stroke: #005200; stroke-width: 2; }
.rings circle { stroke: #008000; }
.lbl text { fill: #fff; font-family: "Noto Sans CJK SC", sans-serif; font-size: 18px; text-anchor: middle; }
.ax { fill: #f00; font-size: 15px; text-anchor: middle; }
.wm { fill: #858585; }
.wm1 { font-size: 20px; }
.wm2 { font-size: 15px; }
.viewbar { position: absolute; right: 1px; top: 0; width: 32px; background: #fff; border-radius: 2px; padding: 12px 0 14px; display: flex; flex-direction: column; align-items: center; gap: 9px; }
.viewbar svg { width: 20px; height: 20px; }
.viewbar .caret { width: 8px; height: 5px; margin: 5px auto 0; }
.viewbar text { font: bold 8px "Noto Sans", sans-serif; fill: #1a73e8; stroke: none; }
.viewbar hr { width: 24px; margin: -2px 0 -3px; border: 0; border-top: 1px solid #777; }

.status { height: 31px; display: flex; align-items: center; background: #fbfbfb; white-space: nowrap; padding-left: 2px; }
.s1 { width: 40px; } .s2 { width: 50px; } .s3 { width: 40px; } .s4 { width: 100px; } .s5, .s6 { width: 110px; }
.snap { display: flex; gap: 4px; }
.snap button { width: 25px; height: 25px; border: 1px solid #999; border-radius: 3px; display: flex; align-items: center; justify-content: center; gap: 3px; }
.snap .w { width: 36px; }
.snap .on { background: #d5e6fb; border-color: #1a73e8; }
.snap svg:first-child { width: 16px; height: 16px; }
.diag { margin: 0 4px 0 15px; }
.taskbar { height: 8px; flex: none; display: flex; overflow: hidden; background: linear-gradient(90deg, #22343d, #20394a 60%, #152844); color: #fff; }
.start { width: 48px; }
.pale { width: 288px; background: #f1f1f1; padding: 2px 0 0 226px; }
.pale i { display: block; width: 24px; height: 24px; border: 3px solid #35aaa6; border-radius: 50%; background: #cfe9e8; }
.lit { margin-left: 806px; width: 160px; background: #4a5863; }
.taskbar time { margin-left: auto; padding-right: 74px; }

.dialog { position: absolute; left: 228px; right: 227px; top: 107px; bottom: 116px; background: #fff; border: 1px solid #bcbcc0; box-shadow: 0 1px 14px rgba(0, 0, 0, .4); display: flex; flex-direction: column; }
.dialog > header { height: 29px; display: flex; align-items: center; gap: 16px; padding: 8px 12px 0 10px; }
.dialog > header h2 { font-size: 14px; margin-right: auto; }
.dialog > header svg { width: 12px; height: 12px; }
.dlg-tools { height: 29px; border: solid #c6c6ca; border-width: 1px 0; display: flex; align-items: center; gap: 11px; padding: 0 6px; flex: none; }
.dlg-tools button { display: flex; align-items: center; gap: 4px; }
.dlg-tools .caret { margin: 0 -5px 0 3px; }
.dlg-tools label { width: 119px; height: 25px; margin-left: -5px; border: 1px solid #c2c2c6; border-radius: 2px; display: flex; align-items: center; padding: 0 7px 0 3px; }
.dlg-tools input { width: 96px; }
.dlg-body { flex: 1; min-height: 0; display: flex; border-bottom: 1px solid #c6c6ca; }
.left { width: 266px; border-right: 5px solid #f0f0f0; display: flex; flex-direction: column; background: #fafafa; }
.tabs { display: flex; gap: 4px; align-items: flex-end; height: 26px; flex: none; }
.tabs button { width: 72px; height: 21px; background: #dfdfdf; border-radius: 2px 2px 0 0; color: #444; margin-bottom: 1px; }
.tabs .on { height: 27px; margin-bottom: -2px; background: #fff; border: 1px solid #c6c6ca; border-bottom: 0; color: #1a73e8; }
.tree { flex: 1; min-height: 0; border: 2px solid #c6c6ca; border-left-width: 1px; background: #fff; padding-top: 1px; overflow: hidden; }
.tree li { height: 22px; margin: 1px 9px 2px 40px; display: flex; align-items: center; gap: 6px; padding-left: 5px; white-space: nowrap; }
.tree li svg { width: 14px; height: 14px; }
.tree .root { margin-left: 0; padding-left: 10px; gap: 5px; }
.tree .root svg { width: 8px; height: 5px; }
.tree .on { background: #c9dff9; }
.sheet { flex: 1; min-width: 0; overflow: hidden; display: flex; flex-direction: column; }
table { border-collapse: collapse; table-layout: fixed; width: 1237px; color: #000; }
.c0 { width: 7px; } .c1 { width: 73px; } .c2 { width: 91px; }
tr { height: 19px; }
td, th { border: 1px solid #000; padding: 0 0 0 2px; height: 19px; line-height: 16px; text-align: left; vertical-align: top; font-family: "Liberation Mono", "Noto Sans CJK SC", monospace; font-size: 10px; white-space: nowrap; overflow: hidden; }
th { font-size: 12px; text-align: center; vertical-align: middle; padding: 0; }
td.m { font-size: 12px; text-align: center; padding: 0; }
td.n { font: 12px/18px "Noto Sans CJK SC", sans-serif; padding: 0; color: #555; background: #f0f0f0; border-color: #c0c0c0; overflow: visible; }
.total { background: #ccffd9; }
.hbar { margin: auto 427px 3px 12px; height: 4px; background: #ececec; border-radius: 2px; }
.dialog > footer { height: 30px; flex: none; display: flex; justify-content: flex-end; align-items: flex-end; padding: 3px; }
.dialog > footer svg { width: 9px; height: 9px; }
.arrow { position: absolute; left: 251px; top: 290px; width: 612px; height: 218px; }
```
